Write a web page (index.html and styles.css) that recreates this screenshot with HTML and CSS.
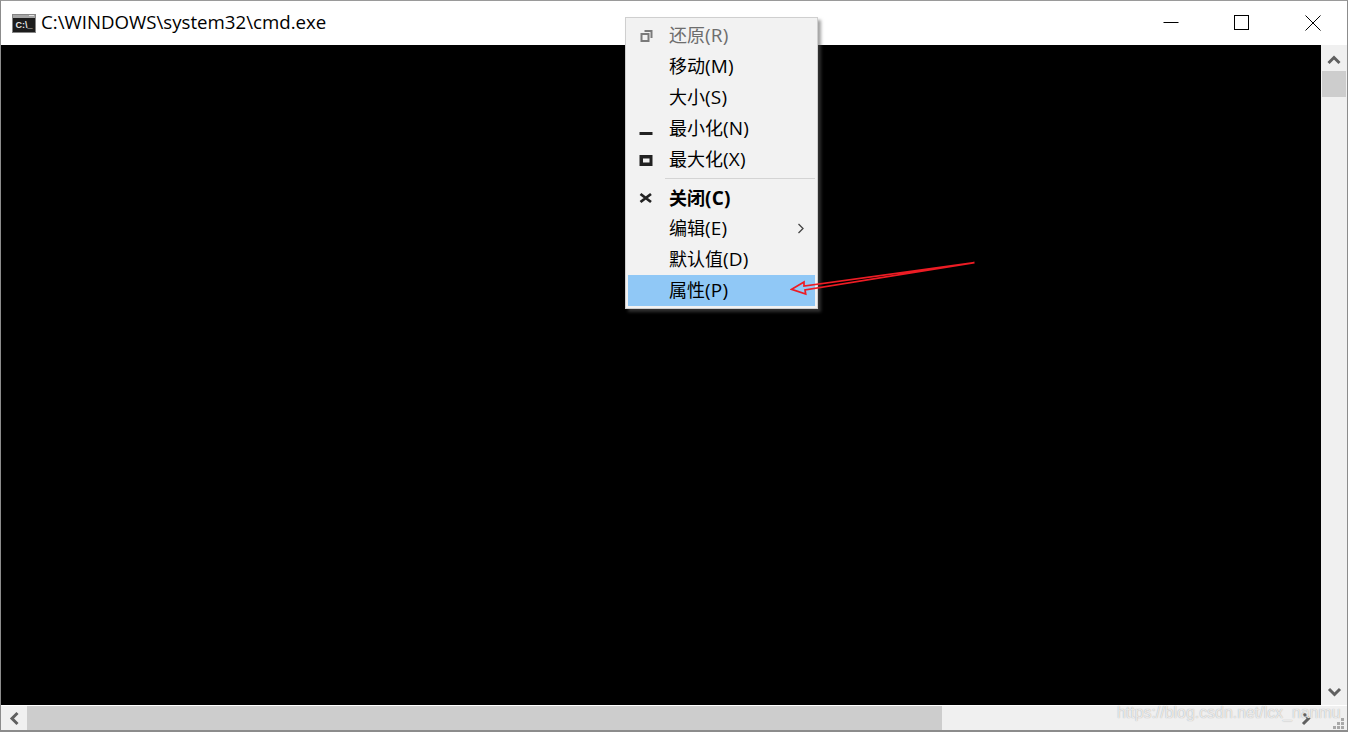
FILE: index.html
```html
<!DOCTYPE html>
<html lang="zh-CN">
<head>
<meta charset="utf-8">
<title>cmd.exe</title>
<link rel="stylesheet" href="styles.css">
</head>
<body>
<div class="window">
  <header class="titlebar">
    <svg class="app-icon" width="24" height="19" viewBox="0 0 24 19">
      <rect width="24" height="19" fill="#858585"/>
      <rect x="1" y="1" width="22" height="3" fill="#a6a6a6"/>
      <rect x="17" y="1" width="5" height="1" fill="#e4e4e4"/>
      <rect x="1" y="4" width="22" height="14" fill="#1c1c1c"/>
      <text class="icon-text" x="3.500" y="14">C:\_</text>
    </svg>
    <span class="title">C:\WINDOWS\system32\cmd.exe</span>
    <div class="caption">
      <button class="cap-btn"><svg width="16" height="16" viewBox="0 0 16 16"><path d="M0.500 7.500H15.500" stroke="#000" fill="none"/></svg></button>
      <button class="cap-btn"><svg width="16" height="16" viewBox="0 0 16 16"><rect x="0.500" y="0.500" width="14" height="14" stroke="#000" fill="none"/></svg></button>
      <button class="cap-btn"><svg width="16" height="16" viewBox="0 0 16 16"><path d="M0.500 0.500L15.500 15.500M15.500 0.500L0.500 15.500" stroke="#000" fill="none"/></svg></button>
    </div>
  </header>
  <div class="main">
    <div class="console"></div>
    <div class="vscroll">
      <svg class="arrow" width="26" height="26" viewBox="0 0 26 26"><path d="M7.500 18L13 12.500L18.500 18" fill="none" stroke="#606060" stroke-width="3"/></svg>
      <div class="vthumb"></div>
      <div class="spacer"></div>
      <svg class="arrow" width="26" height="26" viewBox="0 0 26 26"><path d="M8 10L13.500 15.500L19 10" fill="none" stroke="#606060" stroke-width="3"/></svg>
    </div>
  </div>
  <div class="hscroll">
    <svg class="harrow" width="26" height="24" viewBox="0 0 26 24"><path d="M16.500 7L11 12.500L16.500 18" fill="none" stroke="#606060" stroke-width="3"/></svg>
    <div class="hthumb"></div>
    <div class="spacer"></div>
    <svg class="harrow end" width="26" height="24" viewBox="0 0 26 24"><path d="M8 7L13.500 12.500L8 18" fill="none" stroke="#606060" stroke-width="3"/></svg>
    <svg class="grip" width="11" height="11" viewBox="0 0 11 11"><path d="M8 0h3v3H8zM4 4h3v3H4zM8 4h3v3H8zM0 8h3v3H0zM4 8h3v3H4zM8 8h3v3H8z" fill="#a8a8a8"/></svg>
  </div>
</div>

<nav class="menu">
  <div class="item disabled"><svg class="mi" width="14" height="14" viewBox="0 0 14 14"><path d="M5.500 2H12.500V9M2.500 5H9.500V12H2.500Z" fill="none" stroke="#7a7a7a" stroke-width="2"/></svg><span>还原<span class="key">(R)</span></span></div>
  <div class="item"><span>移动<span class="key">(M)</span></span></div>
  <div class="item"><span>大小<span class="key">(S)</span></span></div>
  <div class="item"><svg class="mi" width="14" height="14" viewBox="0 0 14 14"><rect x="0.500" y="10" width="13" height="3" fill="#222"/></svg><span>最小化<span class="key">(N)</span></span></div>
  <div class="item"><svg class="mi" width="14" height="14" viewBox="0 0 14 14"><path d="M0.500 2H13.500V13H0.500ZM4 5.500V9.500H10.500V5.500Z" fill="#222" fill-rule="evenodd"/></svg><span>最大化<span class="key">(X)</span></span></div>
  <div class="sep"></div>
  <div class="item bold"><svg class="mi" width="14" height="14" viewBox="0 0 14 14"><path d="M1.500 3L12 11M12 3L1.500 11" fill="none" stroke="#222" stroke-width="2.800"/></svg><span>关闭<span class="key">(C)</span></span></div>
  <div class="item"><span>编辑<span class="key">(E)</span></span><svg class="chev" width="8" height="12" viewBox="0 0 8 12"><path d="M1.500 1L6 5.500L1.500 10" fill="none" stroke="#444" stroke-width="1.300"/></svg></div>
  <div class="item"><span>默认值<span class="key">(D)</span></span></div>
  <div class="item active"><span>属性<span class="key">(P)</span></span></div>
</nav>

<svg class="annotation" width="200" height="50" viewBox="0 0 200 50">
  <path d="M184.500 12.700L14 36L14 32L1.700 39.300L15.700 44L15 40L184.500 12.700" fill="none" stroke="#ed1c24" stroke-width="1.700"/>
</svg>

<div class="watermark">https://blog.csdn.net/lcx_nanmu</div>
</body>
</html>
```
FILE: styles.css
```css
* { box-sizing: border-box; }
html, body { margin: 0; padding: 0; height: 732px; overflow: hidden; background: #fff; }
body { font-family: "Open Sans", "Noto Sans CJK SC", sans-serif; color: #000; position: relative; }
.window { height: 732px; display: flex; flex-direction: column; border: 1px solid #8c8c8c; border-bottom-width: 2px; border-top-color: #9a9a9a; }
.titlebar { height: 44px; background: #fff; display: flex; align-items: center; }
.app-icon { margin-left: 11px; margin-right: 5px; margin-top: 1px; flex: none; }
.icon-text { font-family: "Liberation Sans", sans-serif; font-size: 9px; font-weight: 700; fill: #e8e8e8; }
.title { font-size: 18.670px; line-height: 24px; flex: 1; position: relative; top: -1px; }
.caption { display: flex; margin-right: -1px; }
.cap-btn { width: 71px; height: 44px; padding: 0; border: 0; background: transparent; display: flex; align-items: center; justify-content: center; }
.main { flex: 1; display: flex; min-height: 0; }
.console { flex: 1; background: #000; }
.vscroll { width: 26px; background: #f0f0f0; display: flex; flex-direction: column; }
.arrow { flex: none; display: block; }
.vthumb { height: 26px; background: #cdcdcd; margin: 0 1px; flex: none; }
.spacer { flex: 1; }
.hscroll { height: 24px; margin-top: 1px; background: #f0f0f0; display: flex; align-items: stretch; position: relative; }
.harrow { flex: none; display: block; }
.harrow.end { margin-right: 26px; }
.hthumb { width: 915px; background: #cdcdcd; flex: none; }
.grip { position: absolute; right: 3px; bottom: 1px; }
.menu { position: absolute; left: 625px; top: 17px; width: 193px; height: 292px; background: #f2f2f2; border: 1px solid #cfcfcf; padding: 2px; box-shadow: 3px 3px 3px rgba(90,90,90,.55); font-size: 18px; color: #000; }
.item { height: 31px; display: flex; align-items: center; padding-left: 41px; position: relative; line-height: 31px; }
.key { font-size: 19px; letter-spacing: 0.2px; }
.item.disabled { color: #6d6d6d; }
.item.bold { font-weight: 700; padding-top: 2px; }
.item.active { background: #90c8f6; }
.mi { position: absolute; left: 11px; top: 9px; }
.chev { position: absolute; right: 10px; top: 10px; }
.sep { height: 7px; margin-left: 37px; position: relative; }
.sep::before { content: ""; display: block; height: 1px; background: #d4d4d4; position: relative; top: 3px; }
.annotation { position: absolute; left: 790px; top: 250px; }
.watermark { position: absolute; left: 1117px; top: 702px; font-family: "Liberation Sans", sans-serif; font-size: 15.900px; line-height: 22px; color: rgba(255,255,255,.75); text-shadow: 0 0 1px #9a9a9a; white-space: nowrap; }
```
